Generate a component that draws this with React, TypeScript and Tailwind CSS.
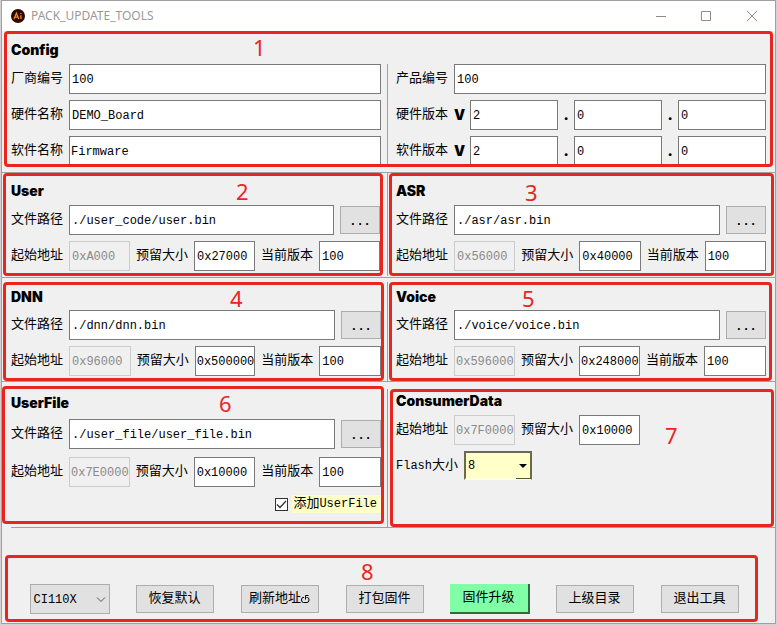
import React, { useId } from "react";

const MONO = "font-['Liberation_Mono','Noto_Sans_CJK_SC',monospace] text-[12px]";
const LABEL =
  "shrink-0 whitespace-nowrap font-['Liberation_Mono','Noto_Sans_CJK_SC',monospace] text-[13px] leading-[20px] text-black";
const BLACK = "font-['Inter',sans-serif] font-black text-[14px] text-black";
const FRAME = "relative overflow-hidden rounded-[4px] border-[3px] border-[#e8261f]";

function Field({
  label,
  value,
  disabled = false,
  className = "flex-1",
}: {
  label: string;
  value: string;
  disabled?: boolean;
  className?: string;
}) {
  const id = useId();
  return (
    <>
      <label htmlFor={id} className={LABEL}>
        {label}
      </label>
      <TextBox id={id} value={value} disabled={disabled} className={className} />
    </>
  );
}

function TextBox({
  id,
  value,
  name,
  disabled = false,
  className = "flex-1",
}: {
  id?: string;
  value: string;
  name?: string;
  disabled?: boolean;
  className?: string;
}) {
  return (
    <input
      id={id}
      type="text"
      aria-label={name}
      defaultValue={value}
      disabled={disabled}
      className={`h-[30px] min-w-0 rounded-none border pt-[2px] outline-none ${MONO} ${
        value.length === 8 ? "pl-px" : "pl-[2px]"
      } ${
        disabled ? "border-[#cccccc] bg-[#f0f0f0] text-[#8a8a8a]" : "border-[#7a7a7a] bg-white text-black"
      } ${className}`}
    />
  );
}

function Version({ label, parts }: { label: string; parts: string[] }) {
  return (
    <div className="flex items-center" role="group" aria-label={label}>
      <span className={`${LABEL} w-[58px]`}>{label}</span>
      <span className={`${BLACK} w-4 leading-[20px]`}>V</span>
      {parts.map((part, i) => (
        <React.Fragment key={i}>
          {i > 0 && <span className={`${BLACK} w-4 text-center leading-[20px]`}>.</span>}
          <TextBox value={part} name={`${label} ${i + 1}`} />
        </React.Fragment>
      ))}
    </div>
  );
}

function Badge({ n, className }: { n: number; className: string }) {
  return (
    <span
      className={`absolute font-['Noto_Sans',sans-serif] text-[22px] leading-[24px] text-[#e8261f] ${className}`}
    >
      {n}
    </span>
  );
}

function Title({ children, className = "h-[29px]" }: { children: string; className?: string }) {
  return <h2 className={`flex items-center ${BLACK} ${className}`}>{children}</h2>;
}

function PathRow({ value }: { value: string }) {
  return (
    <div className="flex items-center gap-[6px]">
      <Field label="文件路径" value={value} />
      <button
        type="button"
        aria-label="浏览"
        className="h-[28px] w-[40px] shrink-0 border border-[#adadad] bg-[#e1e1e1] pt-[4px] font-['Liberation_Mono',monospace] text-[12px] font-bold text-black"
      >
        ...
      </button>
    </div>
  );
}

function AddressRow({ start, size, version }: { start: string; size: string; version: string }) {
  return (
    <div className="flex items-center gap-[6px]">
      <Field label="起始地址" value={start} disabled />
      <Field label="预留大小" value={size} />
      <Field label="当前版本" value={version} />
    </div>
  );
}

function Divider({ className = "" }: { className?: string }) {
  return <div className={`w-px shrink-0 bg-[#a0a0a0] ${className}`} />;
}

function ActionButton({ children, primary = false }: { children: React.ReactNode; primary?: boolean }) {
  return (
    <button
      type="button"
      className={`flex items-center justify-center whitespace-nowrap ${LABEL} ${
        primary
          ? "h-[30px] w-[80px] border-r-2 border-b-2 border-[#2f6b42] bg-[#80ffa6]"
          : "h-[28px] w-[78px] border border-[#adadad] bg-[#e1e1e1]"
      }`}
    >
      {children}
    </button>
  );
}

export default function App() {
  return (
    <div className="min-h-screen bg-[#d6d2d4] pr-[2px] pb-[2px] pl-px">
      <div className="border border-[#a0a0a4] bg-[#f0f0f0]">
        <header className="flex h-[30px] items-center bg-white pl-[9px]">
          <svg width="14" height="14" viewBox="0 0 14 14" aria-hidden="true">
            <circle cx="7" cy="7" r="7" fill="#2d0a00" />
            <path
              d="M3 10 5.4 4.2 7.8 10M4 8.2h2.8M9.9 6.2V10M9.9 4v1.1"
              fill="none"
              stroke="#f58a1f"
              strokeWidth="1.3"
            />
          </svg>
          <h1 className="ml-[6px] flex-1 font-['Noto_Sans',sans-serif] text-[12px] text-[#999999]">
            PACK_UPDATE_TOOLS
          </h1>
          <div className="flex text-[#8c8c8c]">
            <button type="button" aria-label="最小化" className="flex h-[28px] w-[45px] items-center justify-center">
              <svg width="10" height="10" viewBox="0 0 10 10" stroke="currentColor" fill="none">
                <path d="M0 5.5h10" />
              </svg>
            </button>
            <button type="button" aria-label="最大化" className="flex h-[28px] w-[46px] items-center justify-center">
              <svg width="10" height="10" viewBox="0 0 10 10" stroke="currentColor" fill="none">
                <path d="M.5.5h9v9h-9z" />
              </svg>
            </button>
            <button type="button" aria-label="关闭" className="flex h-[28px] w-[46px] items-center justify-center">
              <svg width="10" height="10" viewBox="0 0 10 10" stroke="currentColor" fill="none">
                <path d="M0 0l10 10M10 0L0 10" />
              </svg>
            </button>
          </div>
        </header>

        <main>
          <section className={`mx-[2px] pr-[4px] pl-[4px] ${FRAME}`}>
            <Title className="h-[30px]">Config</Title>
            <Badge n={1} className="top-px left-[246px]" />
            <div className="-mb-[2px] flex">
              <div className="flex min-w-0 flex-1 flex-col gap-[6px]">
                <div className="flex items-center gap-[6px]">
                  <Field label="厂商编号" value="100" />
                </div>
                <div className="flex items-center gap-[6px]">
                  <Field label="硬件名称" value="DEMO_Board" />
                </div>
                <div className="flex items-center gap-[6px]">
                  <Field label="软件名称" value="Firmware" />
                </div>
              </div>
              <Divider className="mr-[8px] ml-[6px]" />
              <div className="flex min-w-0 flex-1 flex-col gap-[6px]">
                <div className="flex items-center gap-[6px]">
                  <Field label="产品编号" value="100" />
                </div>
                <Version label="硬件版本" parts={["2", "0", "0"]} />
                <Version label="软件版本" parts={["2", "0", "0"]} />
              </div>
            </div>
          </section>

          <div className="mt-[5px] grid grid-cols-[minmax(0,380fr)_6px_minmax(0,385fr)] border-t border-[#a0a0a0] pr-px pl-px">
            <section className={`pb-[2px] pl-[5px] ${FRAME}`}>
              <Title>User</Title>
              <Badge n={2} className="top-[3px] left-[230px]" />
              <div className="flex flex-col gap-[6px]">
                <PathRow value="./user_code/user.bin" />
                <AddressRow start="0xA000" size="0x27000" version="100" />
              </div>
            </section>
            <Divider className="ml-[4px]" />
            <section className={`pr-[5px] pb-[2px] pl-[4px] ${FRAME}`}>
              <Title>ASR</Title>
              <Badge n={3} className="top-[4px] left-[133px]" />
              <div className="flex flex-col gap-[6px]">
                <PathRow value="./asr/asr.bin" />
                <AddressRow start="0x56000" size="0x40000" version="100" />
              </div>
            </section>
          </div>

          <div className="mt-px grid grid-cols-[minmax(0,381fr)_5px_minmax(0,383fr)] border-t border-[#a0a0a0] pt-[4px] pr-[3px] pl-px">
            <section className={`pb-[2px] pl-[5px] ${FRAME}`}>
              <Title className="mb-[2px] h-[23px]">DNN</Title>
              <Badge n={4} className="top-px left-[224px]" />
              <div className="flex flex-col gap-[6px]">
                <PathRow value="./dnn/dnn.bin" />
                <AddressRow start="0x96000" size="0x500000" version="100" />
              </div>
            </section>
            <Divider className="ml-[3px]" />
            <section className={`pr-[3px] pb-[2px] pl-[4px] ${FRAME}`}>
              <Title className="mb-[2px] h-[23px]">Voice</Title>
              <Badge n={5} className="top-px left-[130px]" />
              <div className="flex flex-col gap-[6px]">
                <PathRow value="./voice/voice.bin" />
                <AddressRow start="0x596000" size="0x248000" version="100" />
              </div>
            </section>
          </div>

          <div className="grid grid-cols-[minmax(0,382fr)_6px_minmax(0,384fr)] border-t border-[#a0a0a0] pt-[4px] pr-px">
            <section className={`mb-[3px] pb-[8px] pl-[6px] ${FRAME}`}>
              <Title className="mb-[4px] h-[26px]">UserFile</Title>
              <Badge n={6} className="top-[2px] left-[214px]" />
              <div className="flex flex-col gap-[8px]">
                <PathRow value="./user_file/user_file.bin" />
                <AddressRow start="0x7E0000" size="0x10000" version="100" />
                <div className="flex justify-end">
                  <label className={`flex items-center ${LABEL}`}>
                    <input type="checkbox" defaultChecked className="peer sr-only" />
                    <span className="mr-[4px] flex size-[13px] items-center justify-center border border-[#333333] bg-white text-white peer-checked:text-[#333333]">
                      <svg width="11" height="11" viewBox="0 0 11 11" fill="none" stroke="currentColor" strokeWidth="1.3">
                        <path d="M1 5.5 4 8.5 10 2" />
                      </svg>
                    </span>
                    <span className="flex h-[18px] items-center bg-[#ffffc8] pr-[4px] pl-px">
                      添加<span className="text-[12px]">UserFile</span>
                    </span>
                  </label>
                </div>
              </div>
            </section>
            <Divider className="mt-[3px] ml-[3px]" />
            <section className={`mt-[3px] pl-[3px] ${FRAME}`}>
              <Title className="mb-[6px] h-[17px]">ConsumerData</Title>
              <Badge n={7} className="top-[31px] left-[272px]" />
              <div className="flex flex-col gap-[6px]">
                <div className="flex items-center gap-[6px]">
                  <Field label="起始地址" value="0x7F0000" disabled className="w-[61px]" />
                  <Field label="预留大小" value="0x10000" className="w-[61px]" />
                </div>
                <div className="flex items-center gap-[6px]">
                  <label htmlFor="flash" className={`flex items-center ${LABEL}`}>
                    <span className="text-[12px]">Flash</span>大小
                  </label>
                  <div className="relative">
                    <select
                      id="flash"
                      defaultValue="8"
                      className={`block h-[29px] w-[68px] appearance-none rounded-none border-2 border-t-[#6b6b4a] border-r-[#6b6b4a] border-b-[#ffffe8] border-l-[#6b6b4a] bg-[#ffffc8] pl-[2px] text-black outline-none ${MONO}`}
                    >
                      <option>8</option>
                      <option>16</option>
                    </select>
                    <svg
                      className="pointer-events-none absolute right-0 bottom-0"
                      width="16"
                      height="29"
                      viewBox="0 0 16 29"
                      aria-hidden="true"
                    >
                      <path d="M3 13h8l-4 4z" fill="#000" />
                      <path d="M0 27.5h15" stroke="#55553a" strokeWidth="1" />
                    </svg>
                  </div>
                </div>
              </div>
            </section>
          </div>

          <div className="ml-[9px] border-t border-[#a0a0a0]" />

          <footer className={`mt-[27px] mr-[17px] mb-px ml-[3px] pt-[26px] pr-[3px] pb-[5px] pl-[9px] ${FRAME}`}>
            <Badge n={8} className="top-px left-[353px]" />
            <div className="grid grid-cols-7 items-center justify-items-center">
              <div className="relative">
                <select
                  aria-label="芯片型号"
                  defaultValue="CI110X"
                  className={`block h-[30px] w-[80px] appearance-none rounded-none border border-[#adadad] bg-[#e1e1e1] pt-[2px] pl-[3px] text-black outline-none ${MONO}`}
                >
                  <option>CI110X</option>
                </select>
                <svg
                  className="pointer-events-none absolute top-[13px] right-[4px]"
                  width="10"
                  height="6"
                  viewBox="0 0 10 6"
                  fill="none"
                  stroke="#555555"
                  aria-hidden="true"
                >
                  <path d="M1 .5 5 4.5 9 .5" />
                </svg>
              </div>
              <ActionButton>恢复默认</ActionButton>
              <ActionButton>
                刷新地址
                <svg width="9" height="10" viewBox="0 0 9 10" fill="none" stroke="#000" aria-hidden="true">
                  <path d="M3 3.5H2Q.5 3.5.5 6T2.500 8.500H6Q8 8.500 8 6T6.500 3.500H5.500M4.500 5.500V1.500H7.500" />
                </svg>
              </ActionButton>
              <ActionButton>打包固件</ActionButton>
              <ActionButton primary>固件升级</ActionButton>
              <ActionButton>上级目录</ActionButton>
              <ActionButton>退出工具</ActionButton>
            </div>
          </footer>
        </main>
      </div>
    </div>
  );
}
